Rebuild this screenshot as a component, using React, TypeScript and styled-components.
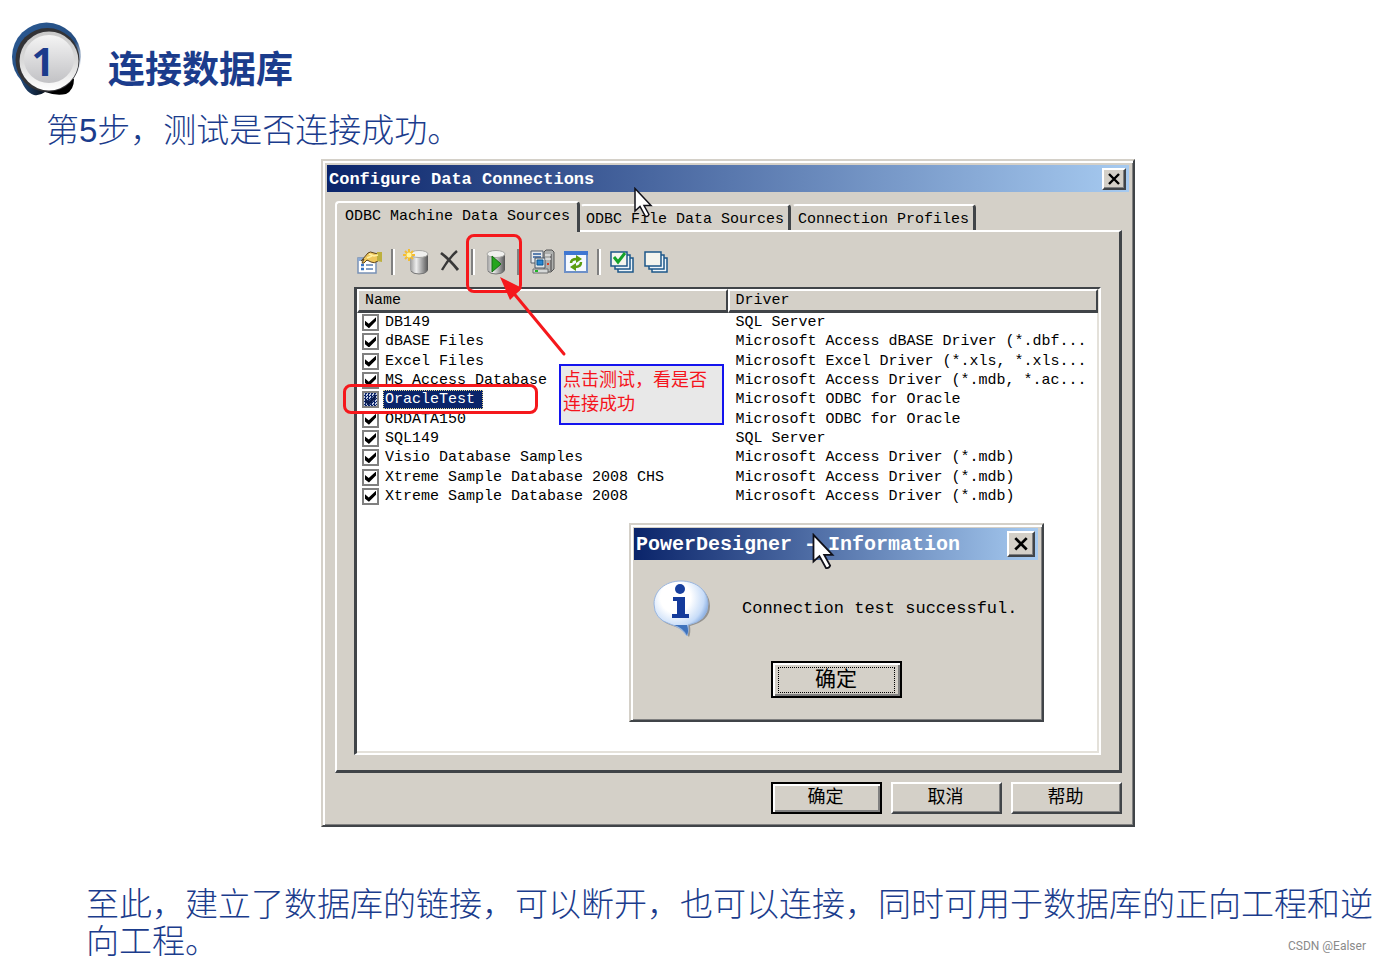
import React from "react";
import styled, { createGlobalStyle, css } from "styled-components";

const navy = "#1b3c8c";
const face = "#d4d0c8";
const shade = "#808080";
const dark = "#404448";
const mono = `"Liberation Mono", "Noto Sans CJK SC", monospace`;
const cjk = `"Liberation Sans", "Noto Sans CJK SC", sans-serif`;

const GlobalStyle = createGlobalStyle`
  *, *::before, *::after { box-sizing: border-box; }
  body { margin: 0; background: #fff; color: #000; }
  button { font: inherit; color: inherit; }
`;

const Slide = styled.main`
  font-family: ${cjk};
  color: ${navy};
`;

const Header = styled.header`
  display: flex;
  align-items: flex-end;
  gap: 26px;
  padding: 22px 12px 0;
`;

const Badge = styled.svg`
  display: block;
  width: 70px;
  height: 75px;
  flex: none;
`;

const Title = styled.h1`
  margin: 0;
  font: bold 37px/60px "Noto Sans CJK SC", sans-serif;
`;

const Step = styled.p`
  margin: 0;
  padding: 15px 46px 10px;
  font-size: 33px;
  line-height: 37px;
  font-weight: 300;
`;

const Stage = styled.div`
  display: grid;
  grid-template-columns: 321fr minmax(814px, 814fr) 246fr;
`;

const windowFrame = css`
  background: ${face};
  border: 2px solid;
  border-color: ${face} ${dark} ${dark} ${face};
  box-shadow: inset 2px 2px #fff, inset -1px -1px ${shade};
  color: #000;
  font-family: ${mono};
`;

const Dialog = styled.section`
  ${windowFrame}
  position: relative;
  grid-column: 2;
  padding: 4px 4px 11px;
`;

const TitleBar = styled.div<{ $large?: boolean }>`
  display: flex;
  align-items: center;
  justify-content: space-between;
  height: ${(p) => (p.$large ? 32 : 27)}px;
  padding: 0 3px 0 2px;
  background: linear-gradient(90deg, #0a246a, #a6caf0);
  color: #fff;
`;

const TitleText = styled.h2<{ $large?: boolean }>`
  margin: 0;
  padding-top: 2px;
  font-size: ${(p) => (p.$large ? 20 : 17)}px;
  line-height: 24px;
  font-weight: bold;
  white-space: pre;
`;

const raised = css`
  background: ${face};
  border: 2px solid;
  border-color: #fff ${dark} ${dark} #fff;
  box-shadow: inset -1px -1px ${shade};
`;

const CloseButton = styled.button<{ $large?: boolean }>`
  ${raised}
  display: grid;
  place-items: center;
  width: ${(p) => (p.$large ? 28 : 24)}px;
  height: ${(p) => (p.$large ? 26 : 22)}px;
  padding: 0;
  color: #000;
  svg { width: ${(p) => (p.$large ? 16 : 14)}px; display: block; }
`;

const Tabs = styled.div`
  display: flex;
  align-items: flex-end;
  padding: 9px 8px 0;
`;

const Tab = styled.button<{ $active?: boolean }>`
  position: relative;
  z-index: ${(p) => (p.$active ? 1 : 0)};
  height: ${(p) => (p.$active ? 31 : 26)}px;
  margin-bottom: ${(p) => (p.$active ? -2 : 0)}px;
  margin-right: ${(p) => (p.$active ? 0 : 1)}px;
  padding: ${(p) => (p.$active ? "0 7px 2px 8px" : "3px 4px 0")};
  background: ${face};
  border: solid;
  border-width: 2px 3px 0 2px;
  border-color: #fff ${dark} #fff ${(p) => (p.$active ? "#fff" : face)};
  border-radius: 4px 4px 0 0;
  font-size: 15px;
  line-height: 20px;
  white-space: nowrap;
`;

const Panel = styled.div`
  margin: 0 7px 0 8px;
  padding: 17px 18px 15px 17px;
  border: solid;
  border-width: 2px 3px 3px 2px;
  border-color: #fff ${dark} ${dark} #fff;
`;

const Toolbar = styled.div`
  display: flex;
  align-items: center;
  gap: 8px;
  height: 26px;
  padding-left: 3px;
  margin-bottom: 12px;
`;

const ToolButton = styled.button`
  width: 26px;
  height: 26px;
  padding: 0;
  border: 0;
  background: none;
  svg { display: block; width: 26px; height: 26px; }
`;

const Separator = styled.span`
  width: 4px;
  height: 26px;
  border-left: 2px solid ${shade};
  border-right: 2px solid #fff;
`;

const ListBox = styled.div`
  min-height: 468px;
  background: #fff;
  border: solid;
  border-width: 2px 2px 2px 3px;
  border-color: ${dark} #fff #fff ${dark};
  box-shadow: inset -2px -2px #e4e1da;
  padding-right: 1px;
`;

const Table = styled.table`
  width: 100%;
  height: 217px;
  table-layout: fixed;
  border-collapse: separate;
  border-spacing: 0;
  font-size: 15px;
  line-height: 18px;
`;

const HeadCell = styled.th`
  height: 23px;
  padding: 1px 6px 0;
  text-align: left;
  font-weight: normal;
  background: ${face};
  border: solid;
  border-width: 2px 2px 3px;
  border-color: #fff ${dark} ${dark} #fff;
`;

const Cell = styled.td`
  height: 19px;
  padding: 1px 0 0 8px;
  white-space: nowrap;
`;

const NameCell = styled(Cell)`
  padding: 0 0 0 5px;
`;

const NameLine = styled.div`
  display: flex;
  align-items: center;
  gap: 4px;
`;

const Check = styled.input<{ $selected: boolean }>`
  appearance: none;
  display: grid;
  place-items: center;
  width: 17px;
  height: 17px;
  margin: 0;
  border: 2px solid ${shade};
  background: ${(p) =>
    p.$selected ? "repeating-conic-gradient(#0a246a 0 25%, #c4cfe8 0 50%) 0 0 / 3px 3px" : "#fff"};
  &:checked::after {
    content: "";
    width: 11px;
    height: 11px;
    background: ${(p) => (p.$selected ? "#0a1c50" : "#000")};
    clip-path: polygon(0 32%, 34% 60%, 100% 0, 100% 36%, 36% 100%, 0 72%);
  }
`;

const Name = styled.label<{ $selected: boolean }>`
  padding: 0 ${(p) => (p.$selected ? 7 : 1)}px 0 1px;
  border: 1px dotted ${(p) => (p.$selected ? "#e8d890" : "transparent")};
  background: ${(p) => (p.$selected ? "#0a246a" : "transparent")};
  color: ${(p) => (p.$selected ? "#fff" : "#000")};
  line-height: 17px;
`;

const Actions = styled.div`
  display: flex;
  justify-content: flex-end;
  gap: 9px;
  padding: 9px 7px 0;
`;

const PushButton = styled.button<{ $default?: boolean; $large?: boolean }>`
  ${raised}
  width: ${(p) => (p.$large ? 131 : 111)}px;
  height: ${(p) => (p.$large ? 37 : 32)}px;
  padding: 0 2px 2px 0;
  font-family: ${cjk};
  font-size: ${(p) => (p.$large ? 21 : 18)}px;
  line-height: 24px;
  ${(p) =>
    p.$default &&
    css`
      border-color: #000;
      box-shadow: inset 2px 2px #fff, inset -2px -2px ${shade};
    `}
`;

const FocusRing = styled.span`
  display: block;
  margin: 2px 3px 0 5px;
  border: 1px dotted #000;
  line-height: 22px;
  padding-bottom: 2px;
`;

const Popup = styled.section`
  ${windowFrame}
  position: absolute;
  left: 306px;
  top: 362px;
  width: 415px;
  padding: 3px 4px 22px 3px;
`;

const Message = styled.div`
  display: flex;
  align-items: center;
  gap: 30px;
  padding: 19px 18px 22px;
  font-size: 17px;
  line-height: 24px;
  white-space: nowrap;
  svg { width: 60px; height: 60px; flex: none; }
`;

const PopupActions = styled.div`
  display: flex;
  justify-content: center;
`;

const Highlight = styled.div<{ $row?: boolean }>`
  position: absolute;
  border: 3px solid #f5181c;
  border-radius: 8px;
  pointer-events: none;
  ${(p) =>
    p.$row
      ? "left: 20px; top: 223px; width: 195px; height: 30px;"
      : "left: 143px; top: 73px; width: 56px; height: 59px;"}
`;

const Callout = styled.p`
  position: absolute;
  left: 236px;
  top: 203px;
  width: 165px;
  height: 61px;
  margin: 0;
  padding: 2px;
  background: #e8e8e8;
  border: 2px solid #1414ee;
  color: #f5141c;
  font: 18px/24px ${cjk};
`;

const Arrow = styled.svg`
  position: absolute;
  left: 172px;
  top: 112px;
  width: 76px;
  height: 86px;
  pointer-events: none;
`;

const Pointer = styled.svg<{ $popup?: boolean }>`
  position: absolute;
  left: ${(p) => (p.$popup ? 180 : 310)}px;
  top: ${(p) => (p.$popup ? 8 : 26)}px;
  width: ${(p) => (p.$popup ? 24 : 20)}px;
  height: ${(p) => (p.$popup ? 38 : 32)}px;
  z-index: 2;
  pointer-events: none;
`;

const Closing = styled.footer`
  padding: 59px 0 0 86px;
  font-size: 33px;
  line-height: 37px;
  font-weight: 300;
`;

const Credit = styled.small`
  float: right;
  margin: 16px 15px 0 0;
  padding-bottom: 7px;
  font: 12px/14px Roboto, sans-serif;
  color: #8a8a8a;
`;

const CloseGlyph = () => (
  <svg viewBox="0 0 14 12" aria-hidden="true">
    <path d="M2 1 12 11M12 1 2 11" stroke="#000" strokeWidth="2.4" fill="none" />
  </svg>
);

const Cursor = ({ popup }: { popup?: boolean }) => (
  <Pointer $popup={popup} viewBox="0 0 20 32" aria-hidden="true">
    <path
      d="M2 1.500V24L7 19.500 12.500 29.500Q15 30 16 27.500L11 18.500H18Z"
      fill="#fff"
      stroke="#101018"
      strokeWidth="1.500"
    />
  </Pointer>
);

const Cylinder = ({ x = 0 }: { x?: number }) => (
  <g transform={`translate(${x} 0)`}>
    <path d="M5 5v16q1 4 9 4t9-4V5z" fill="url(#metal)" />
    <path d="M6 22q2 3 8 3t8-3" fill="none" stroke="#777" />
    <ellipse cx="14" cy="5" rx="9" ry="3.500" fill="#f0f0ee" stroke="#a8a8a4" />
  </g>
);

const PropertiesIcon = () => (
  <svg viewBox="0 0 26 26" aria-hidden="true">
    <path d="M1 9h18v15H1z" fill="#fff" stroke="#7891b6" strokeWidth="1.500" />
    <path d="M1 9h18v3H1z" fill="#8ba9d3" />
    <path d="M4 16h3M4 20h3" stroke="#3974c2" strokeWidth="2.500" />
    <path d="M9 16h7M9 20h7" stroke="#829ec5" strokeWidth="2" />
    <path
      d="M5 11 11 4q2-2 6 0l4 1v7q-4 3-7 1l-4-2-3 3H5l2-4-3 2z"
      fill="#efc75c"
      stroke="#5c431c"
    />
    <path d="M20 3h5v10l-5-1z" fill="#bdb03e" />
    <path d="m12 5 5 2 4-1M10 9l5-2" stroke="#fff0a2" strokeWidth="1.500" fill="none" />
  </svg>
);

const NewIcon = () => (
  <svg viewBox="0 0 26 26" aria-hidden="true">
    <Cylinder x={2} />
    <path d="M6 0v12M0 6h12M2 2l8 8M10 2l-8 8" stroke="#f4bd32" strokeWidth="2" />
    <circle cx="6" cy="6" r="2.500" fill="#fff6a0" />
  </svg>
);

const DeleteIcon = () => (
  <svg viewBox="0 0 26 26" aria-hidden="true">
    <path d="M4 4q8 6 17 17" fill="none" stroke="#383838" strokeWidth="2.800" />
    <path d="M20 2Q12 9 5 21" fill="none" stroke="#383838" strokeWidth="2.400" />
  </svg>
);

const TestIcon = () => (
  <svg viewBox="0 0 26 26" aria-hidden="true">
    <Cylinder x={-1} />
    <path d="M9 7v16l9-8z" fill="#25a51d" stroke="#126d12" />
  </svg>
);

const NetworkIcon = () => (
  <svg viewBox="0 0 26 26" aria-hidden="true">
    <path d="m15 3 2-2h6l2 2v17l-3 3h-7z" fill="#aeb0ae" stroke="#555" />
    <path d="M22 5v17" stroke="#777" strokeWidth="2" />
    <path d="M2 2h12v12H2z" fill="#e6e9ec" stroke="#57616c" />
    <path d="M4 5h8M4 8h8" stroke="#5a7faf" strokeWidth="2" />
    <path d="M6 9h10v10H6z" fill="#e0e2e1" stroke="#485666" />
    <path d="M8 11h6v5H8z" fill="#2a85cf" stroke="#075491" />
    <path d="M4 20h15v4H4z" fill="#d6d8d7" stroke="#6d6f6e" />
    <path d="M6 22h3" stroke="#20b526" strokeWidth="2" />
    <path d="M18 15h2" stroke="#dc3c24" strokeWidth="2" />
    <path d="M16 6h6M16 10h6" stroke="#fff" />
  </svg>
);

const RefreshIcon = () => (
  <svg viewBox="0 0 26 26" aria-hidden="true">
    <path d="M2 3h22v20H2z" fill="#f5f9ff" stroke="#6d90c8" strokeWidth="2" />
    <path d="M1 2h24v4H1z" fill="#3f77d2" />
    <path d="M8 14q0-4 6-4M18 13q0 5-6 5" fill="none" stroke="#5b9d10" strokeWidth="2.500" />
    <path d="m13 6 6 4-6 4zM13 14l-6 4 6 4z" fill="#5b9d10" />
  </svg>
);

const StackIcon = ({ checked }: { checked?: boolean }) => (
  <svg viewBox="0 0 26 26" aria-hidden="true">
    <path d="M9 9h15v14H9z" fill="#eef5fa" stroke="#1d5789" strokeWidth="1.500" />
    <path d="M6 6h15v14H6z" fill="#eef5fa" stroke="#1d5789" strokeWidth="1.500" />
    <path d="M2 3h16v14H2z" fill="#f4f4ee" stroke="#1d5789" strokeWidth="1.500" />
    {checked && <path d="m5 8 4 5 7-9" fill="none" stroke="#15a22a" strokeWidth="3" />}
  </svg>
);

const InfoIcon = () => (
  <svg viewBox="0 0 60 60" aria-hidden="true">
    <defs>
      <radialGradient id="bubble" cx="40%" cy="30%" r="70%">
        <stop offset=".4" stopColor="#fff" />
        <stop offset=".75" stopColor="#c7dcf8" />
        <stop offset="1" stopColor="#5f8fd4" />
      </radialGradient>
    </defs>
    <path
      d="M31 4C15 4 4 14 4 27q0 15 17 20 10 3 16 11 2-4 1-11 20-5 20-20C58 14 47 4 31 4z"
      fill="#6a6a6a"
      opacity=".6"
    />
    <path
      d="M29 2C13 2 2 12 2 25q0 15 16 20 11 3 17 12 2-4 1-11 20-4 20-21C56 12 45 2 29 2z"
      fill="url(#bubble)"
      stroke="#9ab6df"
    />
    <path d="M22 46q9 3 13 10 2-4 0-10z" fill="#3f73bd" />
    <circle cx="28" cy="10" r="5" fill="#173f9e" />
    <path d="M21 18h12v17h4v4H20v-4h5V22h-4z" fill="#143b9b" />
  </svg>
);

const StepBadge = () => (
  <Badge viewBox="0 0 70 75" role="img" aria-label="1">
    <defs>
      <linearGradient id="dome" x2="0" y2="1">
        <stop stopColor="#f4f4f4" />
        <stop offset="1" stopColor="#c2c2c5" />
      </linearGradient>
      <linearGradient id="rim" x2="0" y2="1">
        <stop stopColor="#c8c8c8" />
        <stop offset=".5" stopColor="#dadada" />
        <stop offset="1" stopColor="#fff" />
      </linearGradient>
      <linearGradient id="ring" x2="1" y2="1">
        <stop stopColor="#2b5a94" />
        <stop offset=".6" stopColor="#254d80" />
        <stop offset=".8" stopColor="#dfe5ee" />
      </linearGradient>
      <linearGradient id="feet" x2="1">
        <stop stopColor="#254d80" />
        <stop offset=".6" stopColor="#000" />
      </linearGradient>
      <linearGradient id="metal">
        <stop stopColor="#999" />
        <stop offset=".35" stopColor="#eee" />
        <stop offset="1" stopColor="#555" />
      </linearGradient>
    </defs>
    <circle cx="34.500" cy="35" r="34.500" fill="url(#ring)" />
    <path d="M7 52q5 18 15 21 6 1 11-3 11 4 21 2 8-4 8-15z" fill="url(#feet)" />
    <circle cx="35.500" cy="38" r="32" fill="#333336" />
    <circle cx="37" cy="39" r="29.500" fill="url(#rim)" />
    <ellipse cx="37" cy="37" rx="25" ry="24" fill="url(#dome)" />
    <text
      x="31"
      y="54"
      textAnchor="middle"
      fontFamily="Noto Sans, sans-serif"
      fontWeight="bold"
      fontSize="40"
      fill={navy}
    >
      1
    </text>
  </Badge>
);

const sources = [
  ["DB149", "SQL Server"],
  ["dBASE Files", "Microsoft Access dBASE Driver (*.dbf..."],
  ["Excel Files", "Microsoft Excel Driver (*.xls, *.xls..."],
  ["MS Access Database", "Microsoft Access Driver (*.mdb, *.ac..."],
  ["OracleTest", "Microsoft ODBC for Oracle"],
  ["ORDATA150", "Microsoft ODBC for Oracle"],
  ["SQL149", "SQL Server"],
  ["Visio Database Samples", "Microsoft Access Driver (*.mdb)"],
  ["Xtreme Sample Database 2008 CHS", "Microsoft Access Driver (*.mdb)"],
  ["Xtreme Sample Database 2008", "Microsoft Access Driver (*.mdb)"],
];

const tools: (null | [string, React.ReactNode])[] = [
  ["Properties", <PropertiesIcon />],
  null,
  ["New", <NewIcon />],
  ["Delete", <DeleteIcon />],
  null,
  ["Test connection", <TestIcon />],
  null,
  ["Network", <NetworkIcon />],
  ["Refresh", <RefreshIcon />],
  null,
  ["Select all", <StackIcon checked />],
  ["Deselect all", <StackIcon />],
];

export default function App() {
  return (
    <Slide lang="zh-CN">
      <GlobalStyle />
      <Header>
        <StepBadge />
        <Title>连接数据库</Title>
      </Header>
      <Step>第5步，测试是否连接成功。</Step>
      <Stage>
        <Dialog aria-label="Configure Data Connections">
          <TitleBar>
            <TitleText>Configure Data Connections</TitleText>
            <CloseButton aria-label="Close">
              <CloseGlyph />
            </CloseButton>
          </TitleBar>
          <Tabs role="tablist">
            <Tab role="tab" aria-selected="true" $active>
              ODBC Machine Data Sources
            </Tab>
            <Tab role="tab">ODBC File Data Sources</Tab>
            <Tab role="tab">Connection Profiles</Tab>
          </Tabs>
          <Panel role="tabpanel">
            <Toolbar role="toolbar">
              {tools.map((tool, i) =>
                tool ? (
                  <ToolButton key={i} aria-label={tool[0]}>
                    {tool[1]}
                  </ToolButton>
                ) : (
                  <Separator key={i} />
                )
              )}
            </Toolbar>
            <ListBox>
              <Table>
                <thead>
                  <tr>
                    <HeadCell>Name</HeadCell>
                    <HeadCell>Driver</HeadCell>
                  </tr>
                </thead>
                <tbody>
                  {sources.map(([name, driver], i) => {
                    const selected = name === "OracleTest";
                    return (
                      <tr key={name}>
                        <NameCell>
                          <NameLine>
                            <Check type="checkbox" id={`source-${i}`} defaultChecked $selected={selected} />
                            <Name htmlFor={`source-${i}`} $selected={selected}>
                              {name}
                            </Name>
                          </NameLine>
                        </NameCell>
                        <Cell>{driver}</Cell>
                      </tr>
                    );
                  })}
                </tbody>
              </Table>
            </ListBox>
          </Panel>
          <Actions>
            <PushButton $default>确定</PushButton>
            <PushButton>取消</PushButton>
            <PushButton>帮助</PushButton>
          </Actions>

          <Highlight />
          <Highlight $row />
          <Arrow viewBox="0 0 76 86" aria-hidden="true">
            <path d="M69 81 16 17" stroke="#f5181c" strokeWidth="3" strokeLinecap="round" />
            <path d="M5 4 27 15 15 27z" fill="#f5181c" />
          </Arrow>
          <Callout>点击测试，看是否连接成功</Callout>
          <Cursor />

          <Popup aria-label="PowerDesigner - Information">
            <TitleBar $large>
              <TitleText $large>PowerDesigner - Information</TitleText>
              <CloseButton aria-label="Close" $large>
                <CloseGlyph />
              </CloseButton>
            </TitleBar>
            <Message>
              <InfoIcon />
              <span>Connection test successful.</span>
            </Message>
            <PopupActions>
              <PushButton $default $large>
                <FocusRing>确定</FocusRing>
              </PushButton>
            </PopupActions>
            <Cursor popup />
          </Popup>
        </Dialog>
      </Stage>
      <Closing>
        至此，建立了数据库的链接，可以断开，也可以连接，同时可用于数据库的正向工程和逆向工程。
        <Credit>CSDN @Ealser</Credit>
      </Closing>
    </Slide>
  );
}
